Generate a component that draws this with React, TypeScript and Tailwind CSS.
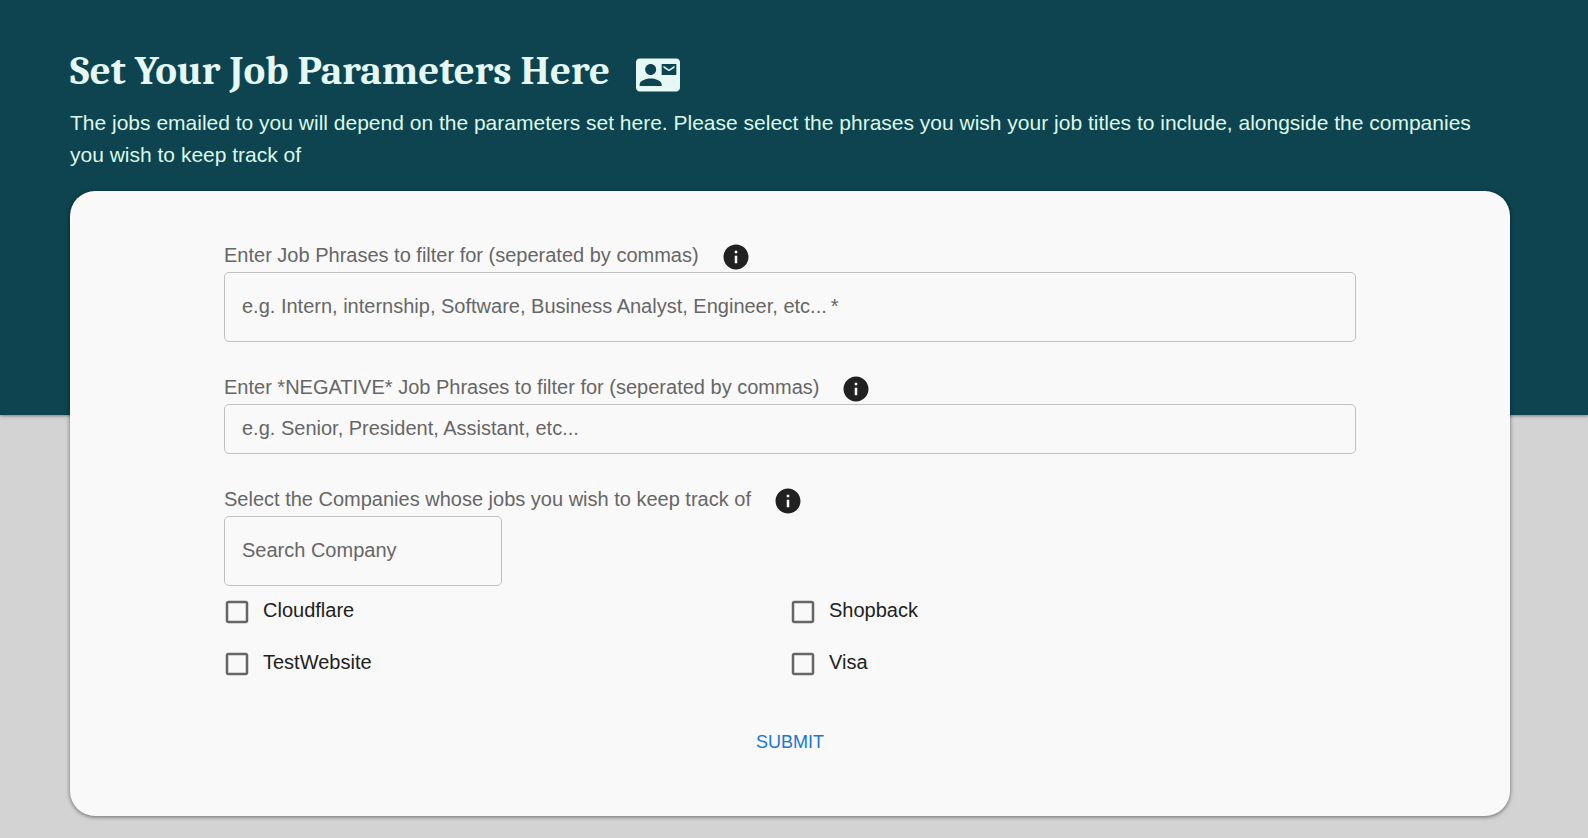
import { useState } from "react";
import type { ReactNode } from "react";
import { MdCheckBox, MdCheckBoxOutlineBlank, MdContactMail, MdInfo } from "react-icons/md";

const companies = ["Cloudflare", "Shopback", "TestWebsite", "Visa"];

const inputStyle =
  "block rounded-[5px] border border-[#c0c0c0] bg-transparent px-[17px] pb-0.5 text-xl text-[#212121] placeholder:text-[#666] placeholder:opacity-100 focus:border-[#1976d2] focus:outline-none";

function FieldLabel({ htmlFor, hint, children }: { htmlFor: string; hint: string; children: ReactNode }) {
  return (
    <div className="flex gap-[22px]">
      <label htmlFor={htmlFor} className="text-xl leading-[26px] text-[#666]">
        {children}
      </label>
      <button type="button" aria-label={hint} className="shrink-0 text-[#212121]">
        <MdInfo className="size-[30px]" />
      </button>
    </div>
  );
}

function CompanyOption({ name }: { name: string }) {
  const [checked, setChecked] = useState(false);
  const Icon = checked ? MdCheckBox : MdCheckBoxOutlineBlank;
  return (
    <label className="flex h-[52px] cursor-pointer items-center gap-[11px] text-xl text-[#212121]">
      <span className={checked ? "grid text-[#1976d2]" : "grid text-[#666]"}>
        <input
          type="checkbox"
          checked={checked}
          onChange={() => setChecked(!checked)}
          className="col-start-1 row-start-1 size-[30px] cursor-pointer opacity-0"
        />
        <Icon className="pointer-events-none col-start-1 row-start-1 size-[30px]" />
      </span>
      <span className="pb-1">{name}</span>
    </label>
  );
}

export default function App() {
  return (
    <div className="min-h-screen bg-[#d3d3d3] pb-[22px] font-['Liberation_Sans',Arial,sans-serif]">
      <header className="bg-[#0d4450] pt-[45px] pr-[78px] pb-[244px] pl-[70px] shadow-[0_1px_3px_rgba(0,0,0,0.4)]">
        <div className="flex items-center gap-[26px] text-[#e5f8f4]">
          <h1 className="font-[Cambria,Caladea,'Liberation_Serif',serif] text-[41px] leading-[50px] font-bold">
            Set Your Job Parameters Here
          </h1>
          <MdContactMail className="mt-2 size-11" />
        </div>
        <p className="pt-2.5 text-[21px] leading-8 text-[#dcf8e9]">
          The jobs emailed to you will depend on the parameters set here. Please select the phrases you wish your job
          titles to include, alongside the companies you wish to keep track of
        </p>
      </header>

      <main className="-mt-56 pr-[78px] pl-[70px]">
        <form
          onSubmit={(event) => event.preventDefault()}
          className="flex flex-col rounded-[25px] bg-[#f9f9f9] px-[154px] pt-[51px] pb-[50px] shadow-[0_1px_4px_rgba(0,0,0,0.5)]"
        >
          <FieldLabel htmlFor="phrases" hint="About job phrases">
            Enter Job Phrases to filter for (seperated by commas)
          </FieldLabel>
          <input
            id="phrases"
            type="text"
            required
            placeholder={"e.g. Intern, internship, Software, Business Analyst, Engineer, etc...\u2009*"}
            className={`${inputStyle} mb-8 h-[70px] w-full`}
          />

          <FieldLabel htmlFor="negative" hint="About negative job phrases">
            Enter *NEGATIVE* Job Phrases to filter for (seperated by commas)
          </FieldLabel>
          <input
            id="negative"
            type="text"
            placeholder="e.g. Senior, President, Assistant, etc..."
            className={`${inputStyle} mb-8 h-[50px] w-full`}
          />

          <FieldLabel htmlFor="company" hint="About companies">
            Select the Companies whose jobs you wish to keep track of
          </FieldLabel>
          <input
            id="company"
            type="text"
            placeholder="Search Company"
            className={`${inputStyle} h-[70px] w-[278px]`}
          />

          <div className="mr-0.5 -ml-0.5 grid grid-cols-2">
            {companies.map((name) => (
              <CompanyOption key={name} name={name} />
            ))}
          </div>

          <button
            type="submit"
            className="mt-7 self-center rounded-[5px] px-2.5 py-2 text-lg leading-8 text-[#1976d2] uppercase hover:bg-[#1976d2]/5"
          >
            Submit
          </button>
        </form>
      </main>
    </div>
  );
}
